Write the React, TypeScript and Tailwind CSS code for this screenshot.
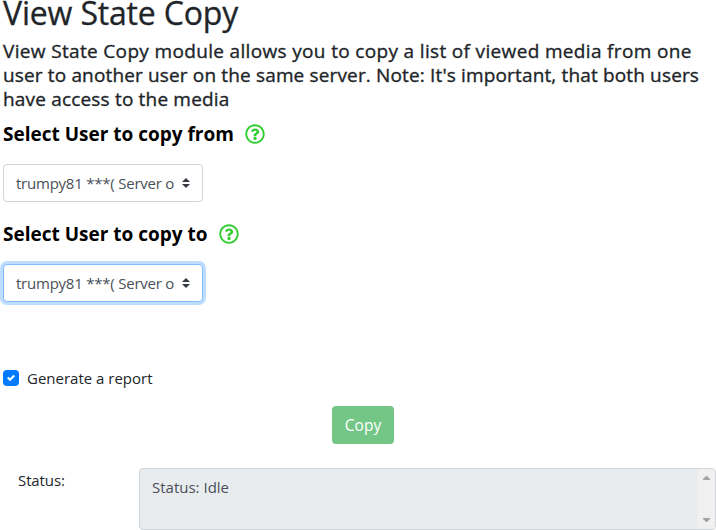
import { useState } from "react";
import { FaRegQuestionCircle } from "react-icons/fa";

function UserSelect({ title, focused }: { title: string; focused?: boolean }) {
  return (
    <section className="h-[100px]">
      <div className="flex h-6 items-center">
        <h5 className="whitespace-nowrap text-[19px] font-bold leading-6 text-black">{title}</h5>
        <FaRegQuestionCircle className="ml-[11px] size-5 text-[#32cd32]" />
      </div>
      <button
        className={`mt-[18px] flex h-[38px] w-[200px] items-center rounded-[4px] border bg-white px-3 text-[#495057] ${
          focused ? "border-[#80bdff] shadow-[0_0_0_3px_#bfdeff]" : "border-[#ced4da]"
        }`}
      >
        <span className="w-[159px] whitespace-nowrap text-left text-[15px] leading-6 tracking-[-0.23px]">
          trumpy81 ***( Server o
        </span>
        <svg className="ml-[7px] h-[10px] w-2 shrink-0" viewBox="0 0 4 5">
          <path fill="#343a40" d="M2 0L0 2h4zm0 5L0 3h4z" />
        </svg>
      </button>
    </section>
  );
}

export default function App() {
  const [checked, setChecked] = useState(true);
  return (
    <main className="h-[530px] w-[716px] overflow-hidden bg-white pl-[3px] font-['Open_Sans','Noto_Sans',sans-serif] text-[#212529]">
      <h2 className="h-[39px] whitespace-nowrap text-[32px] font-medium leading-[26px] tracking-[-0.17px] [-webkit-text-stroke:0.3px]">
        View State Copy
      </h2>
      <h5 className="h-[83px] whitespace-nowrap text-[19px] font-medium leading-6 [-webkit-text-stroke:0.35px]">
        <span className="block tracking-[0.34px]">View State Copy module allows you to copy a list of viewed media from one</span>
        <span className="block tracking-[0.15px]">user to another user on the same server. Note: It's important, that both users</span>
        <span className="block tracking-[0.18px]">have access to the media</span>
      </h5>
      <UserSelect title="Select User to copy from" />
      <UserSelect title="Select User to copy to" focused />
      <label className="mt-[44px] flex h-6 items-center">
        <input type="checkbox" className="sr-only" checked={checked} onChange={() => setChecked(!checked)} />
        <span className="flex size-4 items-center justify-center rounded-[4px] bg-[#007bff]">
          {checked && (
            <svg className="size-2" viewBox="0 0 8 8">
              <path fill="#fff" d="M6.564.75l-3.59 3.612-1.538-1.55L0 4.26l2.974 2.99L8 2.193z" />
            </svg>
          )}
        </span>
        <span className="ml-2 text-[15px] leading-6">Generate a report</span>
      </label>
      <div className="mt-4 flex pl-[329px]">
        <button className="h-[38px] w-[62px] rounded-[4px] bg-[#74c686] text-[15.5px] leading-6 text-white">Copy</button>
      </div>
      <div className="mt-6 flex">
        <span className="w-[136px] pl-[15px] text-[15px] leading-6 tracking-[-0.1px]">Status:</span>
        <div className="flex h-[62px] w-[577px] overflow-hidden rounded-[4px] border border-[#ced4da] bg-[#e9ecef]">
          <span className="grow pl-3 pt-[6px] text-[15px] leading-6 text-[#495057]">Status: Idle</span>
          <div className="flex w-[17px] flex-col items-center justify-between bg-[#f0f0f0] py-[7px]">
            <svg className="h-1 w-[7px]" viewBox="0 0 7 4"><path fill="#a3a3a3" d="M0 4V3L3 0h1l3 3v1z" /></svg>
            <svg className="h-1 w-[7px]" viewBox="0 0 7 4"><path fill="#a3a3a3" d="M0 0v1l3 3h1l3-3V0z" /></svg>
          </div>
        </div>
      </div>
    </main>
  );
}
